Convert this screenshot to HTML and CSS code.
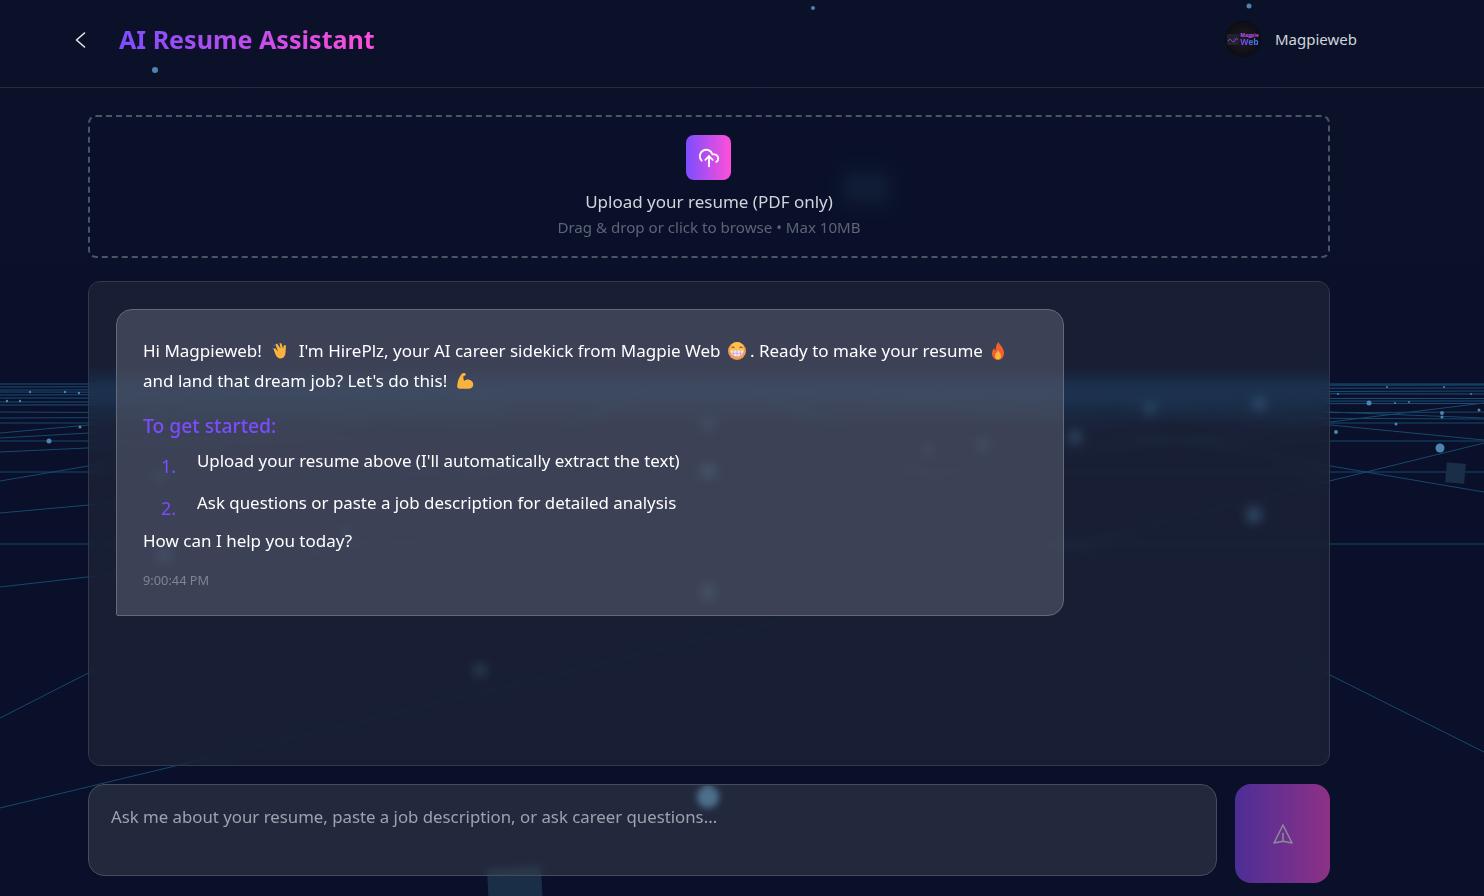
FILE: index.html
```html
<!DOCTYPE html>
<html lang="en">
<head>
<meta charset="utf-8">
<title>AI Resume Assistant</title>
<link rel="stylesheet" href="styles.css">
</head>
<body>
<svg class="scene" width="1484" height="896" viewBox="0 0 1484 896" aria-hidden="true">
  <g class="scene-horizon">
    <path d="M0 384H1484M0 387L1484 385M0 390L1484 388M0 392L1484 394M0 395L1484 391M0 398L1484 398.500M0 402L1484 401M0 405L1484 403.500"/>
  </g>
  <g class="scene-lines">
    <path d="M0 412L1484 419M0 418L1484 412M0 423H1484M0 441H1484M0 472H1484M0 544H1484"/>
    <path d="M0 481L500 396M0 452L500 429M0 438L500 410M0 433L500 388M0 513L600 459M0 587L700 507"/>
    <path d="M900 475L1484 403M742 389L1484 418M900 383L1484 440M1000 562L1484 443M900 393L1484 492"/>
    <path d="M0 718L742 340M742 381L1484 752M0 808L800 616"/>
  </g>
  <g class="scene-dots">
    <circle cx="813" cy="8" r="2"/><circle cx="1249" cy="6" r="2.500"/><circle cx="155" cy="70" r="3"/>
    <circle cx="20" cy="401" r="1.200"/><circle cx="30" cy="392" r="1.200"/><circle cx="65" cy="392" r="1.200"/><circle cx="79" cy="393" r="1.200"/><circle cx="7" cy="401" r="1.200"/><circle cx="49" cy="441" r="2.500"/><circle cx="80" cy="427" r="1.500"/>
    <circle cx="1369" cy="403" r="2.500"/><circle cx="1442" cy="413" r="2"/><circle cx="1442" cy="417" r="1.500"/><circle cx="1479" cy="410" r="1.500"/><circle cx="1395" cy="403" r="1"/><circle cx="1409" cy="402" r="1"/><circle cx="1387" cy="387" r="1"/><circle cx="1338" cy="394" r="1"/><circle cx="1444" cy="387" r="1"/><circle cx="1471" cy="394" r="1"/><circle cx="1396" cy="424" r="1.500"/><circle cx="1336" cy="432" r="2"/><circle cx="1440" cy="448" r="4.500"/>
    <circle cx="708" cy="592" r="7"/><circle cx="708" cy="471" r="7"/><circle cx="708" cy="425" r="5"/><circle cx="1254" cy="515" r="7"/><circle cx="1075" cy="437" r="6"/><circle cx="983" cy="445" r="5"/><circle cx="1150" cy="408" r="5"/><circle cx="1259" cy="404" r="6"/><circle cx="928" cy="450" r="4"/><circle cx="480" cy="670" r="5"/><circle cx="164" cy="555" r="6"/><circle cx="160" cy="476" r="4"/><circle cx="345" cy="530" r="3"/>
    <circle class="scene-dot-bright" cx="708" cy="797" r="11"/>
  </g>
  <g class="scene-squares">
    <rect x="843" y="172" width="47" height="32" transform="rotate(3 866 188)"/>
    <rect x="1446" y="463" width="19" height="20" transform="rotate(5 1455 473)"/>
    <rect x="488" y="868" width="54" height="40" transform="rotate(-3 515 888)"/>
  </g>
</svg>

<div class="page">
  <header class="topbar">
    <div class="topbar-left">
      <button class="back" type="button" aria-label="Back">
        <svg width="24" height="24" viewBox="0 0 24 24" fill="none" stroke="currentColor" stroke-width="1.600" stroke-linecap="round" stroke-linejoin="round"><path d="M15.500 5L7.500 12l8 7"/></svg>
      </button>
      <h1 class="title">AI Resume Assistant</h1>
    </div>
    <div class="account">
      <div class="avatar">
        <svg class="avatar-mark" width="12" height="11" viewBox="0 0 12 11" fill="none"><rect width="12" height="11" rx="1.500" fill="#20232f"/><path d="M1 7c2-3 3-1 4 0s2 2 3-1 2-1 3 0" stroke="#a544e0" stroke-width="1"/></svg>
        <span class="avatar-text"><span class="avatar-top">Magpie</span><span class="avatar-bottom">Web</span></span>
      </div>
      <span class="account-name">Magpieweb</span>
    </div>
  </header>

  <main class="content">
    <section class="upload">
      <div class="upload-icon">
        <svg width="22" height="22" viewBox="0 0 24 24" fill="none" stroke="#fff" stroke-width="2" stroke-linecap="round" stroke-linejoin="round"><path d="M12 10v11"/><path d="M8 14l4-4 4 4"/><path d="M4 14.900A7 7 0 1 1 15.710 8h1.790a4.500 4.500 0 0 1 2.500 8.240"/></svg>
      </div>
      <p class="upload-title">Upload your resume (PDF only)</p>
      <p class="upload-sub">Drag &amp; drop or click to browse • Max 10MB</p>
    </section>

    <section class="chat">
      <article class="bubble">
        <p class="intro">Hi Magpieweb! <svg class="emoji emoji-wave" viewBox="0 0 20 20"><path d="M2 7c1 0 1.500 .5 2 1.500M3.500 4.500C4.500 4 5 4 5.500 4.500" fill="none" stroke="#3b78c4" stroke-width="1"/><path d="M7 2.500l3.500 5L9.500 2l2 .5 1.500 5 1-3.500 2 .5-.5 7c0 3-2 6-5 6-2.500 0-4-2-5-4L3.500 8l1.500-1 3 3.500L5.500 3.500z" fill="#fbb33e"/></svg> I'm HirePlz, your AI career sidekick from Magpie Web <svg class="emoji emoji-grin" viewBox="0 0 20 20"><circle cx="10" cy="10" r="9" fill="#f59b50"/><circle cx="10" cy="8" r="7" fill="#fbc04e"/><path d="M3.500 9.500h13c0 3.500-2.500 6-6.500 6s-6.500-2.500-6.500-6z" fill="#f3e5f5"/><path d="M3.500 12.300h13M10 9.500v6M6.500 9.500v5.500M13.500 9.500v5.500" stroke="#c78bd0" stroke-width=".6"/><path d="M4.500 6.800q1.500-2 3 0M12.500 6.800q1.500-2 3 0" fill="none" stroke="#5a3a2a" stroke-width="1"/></svg>. Ready to make your resume <svg class="emoji" viewBox="0 0 20 20"><path d="M10.500 1c1 3 5.500 5.500 5.500 11 0 4-2.500 7-6 7s-6-3-6-6.500c0-2.500 1-4 2-5.500 .5 1.500 1 2 1.700 2.500C7.500 6 8.500 3 10.500 1z" fill="#f0622c"/><path d="M10 9c.5 2 3 3 3 6 0 2-1.300 3.500-3 3.500S7 17 7 15c0-2.500 2.300-3.500 3-6z" fill="#fbb33e"/></svg><br>and land that dream job? Let's do this! <svg class="emoji emoji-arm" viewBox="0 0 20 20"><path d="M7 2.500c1.500-1 3.500-.5 3.800 .8.200 1-.8 1.700-2.300 1.700-.3 1.500 0 3.500.7 5 1.500-1.700 4.500-2 6.500-.7 2.500 1.500 3.300 4.500 1.800 6.700-1 1.300-3 1.800-5.500 1.800H5c-2 0-3-1.300-2.800-3C2.500 11 4 5.500 7 2.500z" fill="#fbb33e"/></svg></p>
        <h3 class="started">To get started:</h3>
        <ol class="steps">
          <li>Upload your resume above (I'll automatically extract the text)</li>
          <li>Ask questions or paste a job description for detailed analysis</li>
        </ol>
        <p class="closing">How can I help you today?</p>
        <time class="stamp">9:00:44 PM</time>
      </article>
    </section>

    <section class="composer">
      <div class="field">Ask me about your resume, paste a job description, or ask career questions...</div>
      <button class="send" type="button" aria-label="Send">
        <svg width="20" height="20" viewBox="0 0 20 20" fill="none" stroke="currentColor" stroke-width="1.500" stroke-linejoin="round" stroke-linecap="round"><path d="M10 1L1 19 10 17.300 19 19z"/><path d="M10 17.300V9.500"/></svg>
      </button>
    </section>
  </main>
</div>
</body>
</html>
```

FILE: styles.css
```css
* { box-sizing: border-box; }

html, body { height: 100%; }

body {
  margin: 0;
  background: linear-gradient(180deg, #0c112a, #0a1029 60%);
  color: #fff;
  font-family: "Noto Sans", "Open Sans", "Liberation Sans", sans-serif;
  overflow: hidden;
}

p, h1, h3, ol { margin: 0; padding: 0; }

.scene { position: absolute; left: 0; top: 0; }
.scene-horizon { fill: none; stroke: #1a4f7a; stroke-width: 1; }
.scene-lines { fill: none; stroke: #17486e; stroke-width: 1; }
.scene-dots { fill: #4a86b0; }
.scene-dot-bright { fill: #5f9cc6; }
.scene-squares { fill: #1a2f47; }

.page { position: relative; height: 896px; display: flex; flex-direction: column; }

.topbar {
  height: 88px;
  padding: 0 127px 9px 69px;
  display: flex;
  align-items: center;
  justify-content: space-between;
  border-bottom: 1px solid #252b3f;
}
.topbar-left { display: flex; align-items: center; gap: 26px; }
.back { width: 24px; height: 24px; margin-top: 1px; padding: 0; border: 0; background: none; color: #e5e7eb; }
.title {
  font-size: 25.100px;
  line-height: 34px;
  font-weight: 700;
  background: linear-gradient(90deg, #7c4dff, #ff4fd8);
  -webkit-background-clip: text;
  background-clip: text;
  color: transparent;
}
.account { display: flex; align-items: center; gap: 14px; }
.avatar {
  width: 36px; height: 36px; border-radius: 50%;
  background: radial-gradient(circle at 50% 50%, #1d1e25, #08080c 90%);
  display: flex; align-items: center; justify-content: center; gap: 1px;
}
.avatar-text { display: flex; flex-direction: column; font-weight: 700; }
.avatar-top { font-size: 5px; line-height: 6px; color: #c04cf0; }
.avatar-bottom {
  font-size: 8.500px; line-height: 8px;
  background: linear-gradient(90deg, #8a3cf0, #2f7fe8);
  -webkit-background-clip: text;
  background-clip: text;
  color: transparent;
}
.account-name { font-size: 15px; color: #d1d5db; }

.content { padding: 27px 154px 0 88px; display: flex; flex-direction: column; }

.upload {
  height: 143px;
  padding-top: 18px;
  border: 2px dashed #4b5563;
  border-radius: 8px;
  background: rgba(10, 16, 41, .6);
  backdrop-filter: blur(8px);
  display: flex; flex-direction: column; align-items: center;
}
.upload-icon {
  width: 45px; height: 45px; margin-right: 1px; border-radius: 8px;
  background: linear-gradient(90deg, #7c4dff, #ff4fd8);
  display: flex; align-items: center; justify-content: center;
}
.upload-title { margin-top: 10px; font-size: 17px; line-height: 24px; color: #d1d5db; }
.upload-sub { margin-top: 3px; font-size: 15.100px; line-height: 20px; color: #5d6575; }

.chat {
  margin-top: 23px;
  height: 485px;
  padding: 27px;
  border: 1px solid #30384a;
  border-radius: 12px;
  background:
    linear-gradient(180deg, transparent 82px, rgba(31, 85, 130, .2) 102px, rgba(31, 85, 130, .2) 118px, transparent 142px),
    rgba(38, 44, 62, .5);
  backdrop-filter: blur(6px);
}
.bubble {
  width: 948px;
  height: 307px;
  padding: 26px;
  border: 1px solid #636a7a;
  border-radius: 16px 16px 16px 2px;
  background: rgba(85, 90, 108, .6);
  color: #fff;
  font-size: 17px;
}
.intro { line-height: 30px; }
.emoji { width: 20px; height: 20px; vertical-align: -4px; margin: 0 1px; }
.emoji-wave { margin: 0 4px; }
.emoji-grin { margin: 0 3px 0 2px; }
.emoji-arm { margin-left: 3px; }
.started { margin-top: 16px; font-size: 19.300px; line-height: 28px; font-weight: 500; color: #7c4dff; }
.steps { margin-top: 6px; padding-left: 18px; list-style: none; counter-reset: step; }
.steps li { display: flex; font-size: 16.900px; line-height: 29px; margin-bottom: 13px; counter-increment: step; }
.steps li::before {
  content: counter(step) ".";
  flex: 0 0 36px;
  padding-top: 6px;
  margin-bottom: -6px;
  color: #7c4dff;
  font-size: 18px;
}
.closing { margin-top: -2px; line-height: 26px; }
.stamp { display: block; margin-top: 17px; font-size: 12.800px; line-height: 18px; color: #7e8593; }

.composer { margin-top: 18px; display: flex; gap: 18px; align-items: flex-start; }
.field {
  flex: 1;
  height: 92px;
  padding: 21px 22px;
  border: 1px solid #454c5c;
  border-radius: 16px;
  background: rgba(60, 65, 82, .5);
  backdrop-filter: blur(3px);
  color: #9ca3af;
  font-size: 16.800px;
  line-height: 22px;
}
.send {
  width: 95px; height: 99px; padding: 0; border: 0; border-radius: 16px;
  background: linear-gradient(90deg, #4c2e96, #8d3186);
  color: #8c8c97;
  display: flex; align-items: center; justify-content: center;
}
```
